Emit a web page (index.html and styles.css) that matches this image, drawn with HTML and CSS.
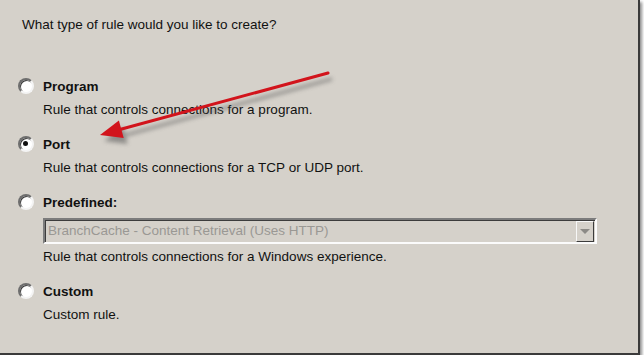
FILE: index.html
```html
<!DOCTYPE html>
<html lang="en">
<head>
  <meta charset="UTF-8">
  <title>New Inbound Rule Wizard - Rule Type</title>
  <link rel="stylesheet" href="styles.css">
</head>
<body>
<div class="panel">
  <p class="question">What type of rule would you like to create?</p>

  <div class="options">
    <div class="option">
      <span class="radio"></span>
      <div class="option-body">
        <div class="option-title">Program</div>
        <div class="option-desc">Rule that controls connections for a program.</div>
      </div>
    </div>

    <div class="option">
      <span class="radio checked"></span>
      <div class="option-body">
        <div class="option-title">Port</div>
        <div class="option-desc">Rule that controls connections for a TCP or UDP port.</div>
      </div>
    </div>

    <div class="option">
      <span class="radio"></span>
      <div class="option-body">
        <div class="option-title">Predefined:</div>
        <div class="combo">
          <span class="combo-text">BranchCache - Content Retrieval (Uses HTTP)</span>
          <span class="combo-btn"><span class="combo-tri"></span></span>
        </div>
        <div class="option-desc">Rule that controls connections for a Windows experience.</div>
      </div>
    </div>

    <div class="option">
      <span class="radio"></span>
      <div class="option-body">
        <div class="option-title">Custom</div>
        <div class="option-desc">Custom rule.</div>
      </div>
    </div>
  </div>

  <!-- red annotation arrow pointing at "Port" -->
  <svg class="arrow" width="644" height="358" viewBox="0 0 644 358">
    <defs>
      <filter id="shadow" x="-20%" y="-50%" width="140%" height="200%">
        <feGaussianBlur stdDeviation="2.2"/>
      </filter>
    </defs>
    <g transform="translate(4,6)" fill="#555" stroke="#555" opacity="0.55" filter="url(#shadow)">
      <line x1="328" y1="73" x2="118" y2="130" stroke-width="3"/>
      <polygon points="100,135 118.9,120.5 123.7,137.9" stroke="none"/>
    </g>
    <g fill="#d2141c" stroke="#d2141c">
      <line x1="328" y1="73" x2="118" y2="130" stroke-width="3" stroke-linecap="round"/>
      <polygon points="100,135 118.9,120.5 123.7,137.9" stroke="none"/>
    </g>
  </svg>
</div>
</body>
</html>
```
FILE: styles.css
```css
body {
  margin: 0;
  background-color: #fff;
  font-family: "Liberation Sans", Arial, sans-serif;
  font-size: 13.5px;
  color: #111;
}

/* dialog page */
.panel {
  position: relative;
  width: 638px;
  height: 353px;
  background-color: #d5d1ca;
  border-right: 2px solid #3a3a3a;
  border-bottom: 2px solid #3a3a3a;
  box-shadow: 2px 2px 3px rgba(0, 0, 0, 0.45);
}

.question {
  margin: 0;
  padding: 17px 0 0 22px;
  line-height: 16px;
}

.options {
  display: flex;
  flex-direction: column;
  gap: 19px;
  padding: 46px 0 0 18px;
}

.option {
  display: flex;
  gap: 9px;
  align-items: flex-start;
}

/* classic sunken radio */
.radio {
  position: relative;
  width: 16px;
  height: 16px;
  margin-top: -1px;
  flex: none;
  border-radius: 50%;
  box-sizing: border-box;
  background-color: #fff;
  border: 2px solid;
  border-color: #6e6e6e #f4f4f4 #f4f4f4 #6e6e6e;
  box-shadow: inset 1px 1px 0 #3c3c3c;
}

.radio.checked::after {
  content: "";
  position: absolute;
  left: 3px;
  top: 3px;
  width: 5px;
  height: 5px;
  border-radius: 50%;
  background-color: #111;
}

.option-body {
  flex: 1;
}

.option-title {
  font-weight: bold;
  line-height: 16px;
  margin-bottom: 7px;
}

.option-desc {
  line-height: 16px;
}

/* disabled combo box */
.combo {
  display: flex;
  align-items: stretch;
  width: 554px;
  height: 26px;
  margin: 1px 0 5px 0;
  box-sizing: border-box;
  border: 2px solid;
  border-color: #7c7c7c #fbfbfb #fbfbfb #7c7c7c;
  box-shadow: inset 1px 1px 0 #3c3c3c;
  background-color: #d5d1ca;
}

.combo-text {
  flex: 1;
  padding: 3px 0 0 3px;
  color: #9a9894;
  line-height: 16px;
}

.combo-btn {
  width: 18px;
  margin: 1px 1px 0 0;
  box-sizing: border-box;
  border: 1px solid;
  border-color: #f7f7f7 #3c3c3c #3c3c3c #f7f7f7;
  display: flex;
  align-items: center;
  justify-content: center;
}

.combo-tri {
  width: 0;
  height: 0;
  border-left: 5px solid transparent;
  border-right: 5px solid transparent;
  border-top: 5px solid #8c8a86;
}

.arrow {
  position: absolute;
  left: 0;
  top: 0;
  pointer-events: none;
}
```
